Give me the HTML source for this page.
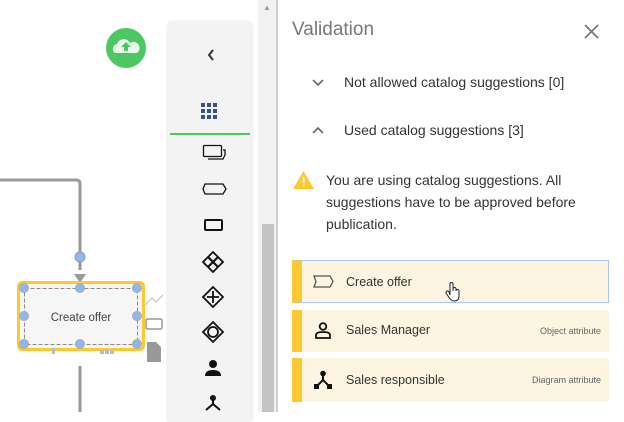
<!DOCTYPE html>
<html><head><style>
*{margin:0;padding:0;box-sizing:border-box}
body{width:624px;height:412px;overflow:hidden;background:#fff;font-family:"Liberation Sans",Roboto,sans-serif;position:relative}
.a{position:absolute}
.t{font-size:14px;color:#333}
.card{position:absolute;left:292px;width:317px;background:#fdf5e1;border-left:10px solid #fdc930}
.card span.n{position:absolute;left:44px;font-size:12.5px;color:#333}
.card span.r{position:absolute;right:8px;font-size:9px;color:#666}
</style></head><body>
<svg class="a" style="left:0;top:0" width="260" height="412">
<path d="M0 180 H76 Q80 180 80 184 V270" stroke="#999" stroke-width="3" fill="none"/>
<path d="M74 274 L86 274 L80 283 Z" fill="#999"/>
<circle cx="80" cy="257" r="5" fill="#8fb6f3" stroke="#999"/>
<rect x="18.5" y="282.5" width="125" height="67" rx="4" fill="#f6f6f6" stroke="#fdc930" stroke-width="3"/>
<rect x="24.5" y="288.5" width="113" height="56" fill="none" stroke="#888" stroke-dasharray="4 2"/>
<g fill="#8fb6f3" stroke="#aaa">
<circle cx="24" cy="288" r="4.5"/><circle cx="80" cy="288" r="4.5"/><circle cx="137" cy="288" r="4.5"/>
<circle cx="24" cy="316" r="4.5"/><circle cx="137" cy="316" r="4.5"/>
<circle cx="24" cy="344" r="4.5"/><circle cx="80" cy="344" r="4.5"/><circle cx="137" cy="344" r="4.5"/></g>
<text x="81" y="321" font-size="11.5" text-anchor="middle" fill="#444" font-family="Liberation Sans">Create offer</text>
<path d="M80 366 V412" stroke="#999" stroke-width="3"/>
<path d="M145 305 L152 298 L156 302 L163 295" stroke="#ccc" stroke-width="1.5" fill="none"/>
<rect x="146" y="319" width="16" height="10" rx="1.5" fill="#fff" stroke="#999" stroke-width="1.5"/>
<path d="M147 342 H156 L161 347 V362 H147 Z" fill="#999"/>
<g fill="#bbb"><rect x="52" y="348" width="3" height="6"/><rect x="100" y="350" width="4" height="4"/><rect x="105" y="350" width="4" height="4"/><rect x="110" y="350" width="4" height="4"/></g>
<circle cx="126" cy="48" r="20" fill="#4cc764"/>
<path d="M115 53 a5 5 0 0 1 2 -9 a7 7 0 0 1 13 -1 a5 5 0 0 1 7 10 Z" fill="#e8f7ea"/>
<path d="M126 42 L121 47 H124 V51 H128 V47 H131 Z" fill="#4cc764"/>
</svg>
<div class="a" style="left:168px;top:22px;width:84px;height:400px;background:#f3f3f3;border-radius:4px;box-shadow:0 0 3px rgba(0,0,0,.15)"></div>
<svg class="a" style="left:168px;top:0" width="90" height="412">
<path d="M45 50 L41 55 L45 60" stroke="#333" stroke-width="2" fill="none"/>
<g fill="#3b4f8c"><rect x="33" y="103" width="4" height="4"/><rect x="39" y="103" width="4" height="4"/><rect x="45" y="103" width="4" height="4"/><rect x="33" y="109" width="4" height="4"/><rect x="39" y="109" width="4" height="4"/><rect x="45" y="109" width="4" height="4"/><rect x="33" y="115" width="4" height="4"/><rect x="39" y="115" width="4" height="4"/><rect x="45" y="115" width="4" height="4"/></g>
<rect x="2" y="133" width="80" height="2" fill="#4cc764"/>
<g stroke="#111" fill="none" stroke-width="1.3">
<rect x="35.5" y="145.5" width="18" height="11" rx="1"/><path d="M40 159 H55 L57 155 V150 H55"/>
<path d="M37 184 H55 L58 189 L55 194 H37 L35 189 Z"/>
<rect x="37" y="220" width="17" height="10" rx="1" stroke-width="2"/>
<path d="M45 252 L55 262 L45 272 L35 262 Z" stroke-width="1.8"/><path d="M40 257 L50 267 M50 257 L40 267" stroke-width="2.2"/>
<path d="M45 287 L55 297 L45 307 L35 297 Z" stroke-width="1.8"/><path d="M45 291 V303 M39 297 H51" stroke-width="1.8"/>
<path d="M45 322 L55 332 L45 342 L35 332 Z" stroke-width="1.8"/><circle cx="45" cy="332" r="5" stroke-width="1.8"/>
</g>
<circle cx="45" cy="364" r="4" fill="#111"/><path d="M37 376 Q37 370 45 370 Q53 370 53 376 Z" fill="#111"/>
<circle cx="45" cy="398" r="3" fill="#111"/><path d="M45 398 V404 L38 410 M45 404 L52 410" stroke="#111" stroke-width="2" fill="none"/>
</svg>
<div class="a" style="left:258px;top:0;width:18px;height:412px;background:#f1f1f1"></div>
<div class="a" style="left:262px;top:224px;width:12px;height:188px;background:#c4c4c4"></div>
<div class="a" style="left:263px;top:3px;font-size:8px;color:#999">▲</div>
<div class="a" style="left:276px;top:0;width:2px;height:412px;background:#cfcfcf"></div>
<div class="a" style="left:292px;top:19px;font-size:19px;color:#777">Validation</div>
<svg class="a" style="left:584px;top:24px" width="15" height="15"><path d="M1 1 L14 14 M14 1 L1 14" stroke="#777" stroke-width="1.8"/></svg>
<svg class="a" style="left:311px;top:78px" width="14" height="60"><path d="M2 2 L7 7 L12 2" stroke="#666" stroke-width="1.6" fill="none"/><path d="M2 55 L7 50 L12 55" stroke="#666" stroke-width="1.6" fill="none"/></svg>
<div class="a t" style="left:344px;top:74px">Not allowed catalog suggestions [0]</div>
<div class="a t" style="left:344px;top:122px">Used catalog suggestions [3]</div>
<svg class="a" style="left:292px;top:170px" width="24" height="20"><path d="M11.5 1 L22 19 H1 Z" fill="#fdc930"/><rect x="10.7" y="7" width="1.8" height="6" fill="#fff"/><rect x="10.7" y="14.5" width="1.8" height="1.8" fill="#fff"/></svg>
<div class="a t" style="left:326px;top:169px;line-height:22px;width:290px">You are using catalog suggestions. All<br>suggestions have to be approved before<br>publication.</div>
<div class="card" style="top:260px;height:43px;border-top:1px solid #a8c6f0;border-right:1px solid #a8c6f0;border-bottom:1px solid #a8c6f0">
<svg class="a" style="left:11px;top:14px" width="22" height="14"><path d="M1 1 H17 L20 6.5 L17 12 H1 L3 6.5 Z" stroke="#555" stroke-width="1.3" fill="none"/></svg>
<span class="n" style="top:14px">Create offer</span>
<svg class="a" style="left:143px;top:20px" width="16" height="22"><path d="M5 14 V3 a1.5 1.5 0 0 1 3 0 V10 V8 a1.5 1.5 0 0 1 3 0 V10 a1.5 1.5 0 0 1 3 0 V15 Q14 20 9 20 Q6 20 3 15 L1 12 a1.5 1.5 0 0 1 3 -1 Z" fill="#fff" stroke="#222" stroke-width="1"/></svg>
</div>
<div class="card" style="top:310px;height:42px">
<svg class="a" style="left:13px;top:12px" width="18" height="18"><circle cx="8" cy="4.5" r="3.3" stroke="#111" stroke-width="1.8" fill="none"/><path d="M1 16 V13 Q1 10 8 10 Q15 10 15 13 V16 Z" stroke="#111" stroke-width="1.8" fill="none"/></svg>
<span class="n" style="top:13px">Sales Manager</span><span class="r" style="top:16px">Object attribute</span>
</div>
<div class="card" style="top:358px;height:44px">
<svg class="a" style="left:12px;top:12px" width="20" height="20"><circle cx="9" cy="3.5" r="2.8" fill="#111"/><path d="M9 4 V10 L3 16 M9 10 L15 16" stroke="#111" stroke-width="2" fill="none"/><rect x="0" y="14" width="5" height="5" fill="#111"/><rect x="13" y="14" width="5" height="5" fill="#111"/></svg>
<span class="n" style="top:15px">Sales responsible</span><span class="r" style="top:17px">Diagram attribute</span>
</div>
</body></html>
